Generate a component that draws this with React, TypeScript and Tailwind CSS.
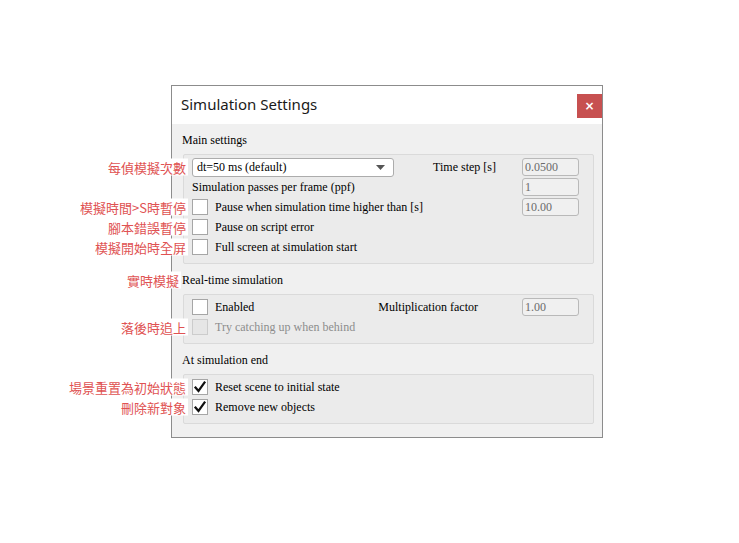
import React from "react";

const serif = "font-['Liberation_Serif',serif] text-[12px] leading-[16px]";

function Note({ text, gap = "mr-[4px]" }: { text: string; gap?: string }) {
  return (
    <span
      className={`absolute right-full top-1/2 -translate-y-1/2 ${gap} whitespace-nowrap bg-white px-[2px] font-['Noto_Sans_CJK_TC',sans-serif] text-[13px] leading-[17px] text-[#e05252]`}
    >
      {text}
    </span>
  );
}

function Check({ checked = false, disabled = false }: { checked?: boolean; disabled?: boolean }) {
  return (
    <span
      className={`flex h-[16px] w-[16px] shrink-0 items-center justify-center border ${
        disabled ? "border-[#cccccc] bg-[#e6e6e6]" : "border-[#a6a6a6] bg-white"
      }`}
    >
      {checked && (
        <svg width="14" height="14" viewBox="0 0 14 14">
          <path d="M2.5 7.5 L5.5 11 L11.5 2.5" fill="none" stroke="#111" strokeWidth="2.2" strokeLinecap="square" />
        </svg>
      )}
    </span>
  );
}

function Field({ value }: { value: string }) {
  return (
    <span
      className={`flex h-[18px] w-[57px] items-center rounded-[3px] border border-[#b9b9b9] bg-[#f0f0f0] pl-[2px] text-[#6b6b6b] ${serif}`}
    >
      {value}
    </span>
  );
}

function Row({ children, note }: { children: React.ReactNode; note?: string }) {
  return (
    <div className="relative flex h-[20px] items-center">
      {note && <Note text={note} />}
      {children}
    </div>
  );
}

function CheckRow({
  label,
  note,
  checked,
  disabled,
  right,
}: {
  label: string;
  note?: string;
  checked?: boolean;
  disabled?: boolean;
  right?: React.ReactNode;
}) {
  return (
    <Row note={note}>
      <Check checked={checked} disabled={disabled} />
      <span className={`ml-[7px] ${serif} ${disabled ? "text-[#8d8d8d]" : "text-black"}`}>{label}</span>
      {right}
    </Row>
  );
}

function Header({ text, note }: { text: string; note?: string }) {
  return (
    <div className="flex h-[16px] items-center pl-[10px]">
      <span className={`relative text-black ${serif}`}>
        {note && <Note text={note} gap="mr-[1px]" />}
        {text}
      </span>
    </div>
  );
}

function Group({ children }: { children: React.ReactNode }) {
  return (
    <div className="ml-[11px] mr-[8px] mt-[6px] rounded-[2px] border border-[#dadada] bg-[#ebebeb] pb-[6px] pl-[8px] pr-[14px] pt-[2px]">
      {children}
    </div>
  );
}

export default function App() {
  return (
    <div className="min-h-screen bg-white pl-[171px] pt-[85px]">
      <div className="flex w-[432px] flex-col border border-[#8c8c8c] bg-[#f0f0f0] pb-[13px]">
        <div className="flex h-[38px] items-start justify-between bg-white">
          <span className="mt-[8px] pl-[9px] font-['Noto_Sans',sans-serif] text-[15px] leading-[20px] text-[#1a1a1a]">
            Simulation Settings
          </span>
          <span className="mt-[8px] flex h-[24px] w-[25px] items-center justify-center bg-[#c75050] font-['DejaVu_Sans',sans-serif] text-[12px] font-bold text-white">
            ×
          </span>
        </div>

        <div className="pt-[8px]">
          <Header text="Main settings" />
        </div>
        <Group>
          <Row note="每偵模擬次數">
            <span className={`flex h-[19px] w-[202px] items-center justify-between rounded-[3px] border border-[#acacac] bg-white pl-[4px] pr-[8px] ${serif}`}>
              dt=50 ms (default)
              <svg width="9" height="5" viewBox="0 0 9 5">
                <path d="M0 0 H9 L4.5 5 Z" fill="#555" />
              </svg>
            </span>
            <span className={`ml-auto mr-[26px] ${serif}`}>Time step [s]</span>
            <Field value="0.0500" />
          </Row>
          <Row>
            <span className={serif}>Simulation passes per frame (ppf)</span>
            <span className="ml-auto">
              <Field value="1" />
            </span>
          </Row>
          <CheckRow
            note="模擬時間>S時暫停"
            label="Pause when simulation time higher than [s]"
            right={
              <span className="ml-auto">
                <Field value="10.00" />
              </span>
            }
          />
          <CheckRow note="腳本錯誤暫停" label="Pause on script error" />
          <CheckRow note="模擬開始時全屏" label="Full screen at simulation start" />
        </Group>

        <div className="pt-[8px]">
          <Header text="Real-time simulation" note="實時模擬" />
        </div>
        <Group>
          <CheckRow
            label="Enabled"
            right={
              <>
                <span className={`ml-auto mr-[44px] ${serif}`}>Multiplication factor</span>
                <Field value="1.00" />
              </>
            }
          />
          <CheckRow note="落後時追上" label="Try catching up when behind" disabled />
        </Group>

        <div className="pt-[8px]">
          <Header text="At simulation end" />
        </div>
        <Group>
          <CheckRow note="場景重置為初始狀態" label="Reset scene to initial state" checked />
          <CheckRow note="刪除新對象" label="Remove new objects" checked />
        </Group>
      </div>
    </div>
  );
}
